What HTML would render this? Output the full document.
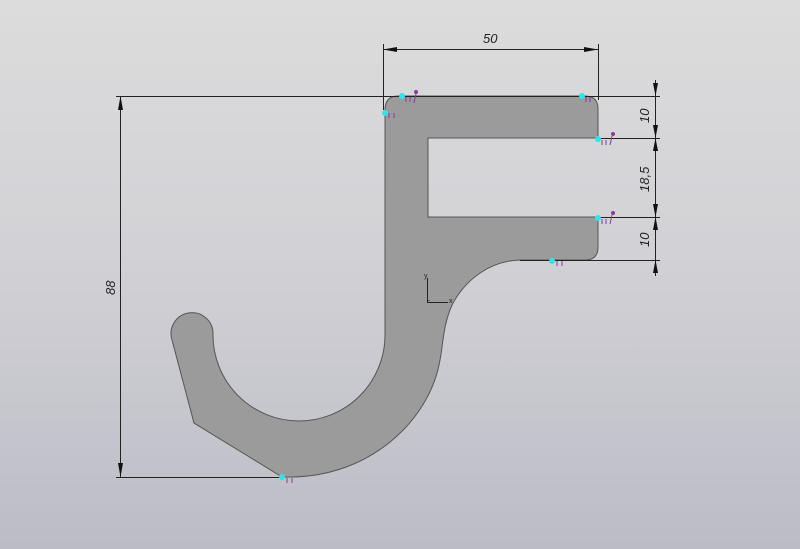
<!DOCTYPE html>
<html><head><style>
html,body{margin:0;padding:0}
body{width:800px;height:549px;overflow:hidden;background:linear-gradient(#dcdcdc 0%,#d2d2d6 45%,#bcbcc6 100%)}
svg{display:block}
text{font-family:"Liberation Sans",sans-serif;font-style:italic;font-size:13px;fill:#222}
</style></head><body>
<svg width="800" height="549" viewBox="0 0 800 549">
<path d="M398,96 L585,96 Q598,96 598,109 L598,138 L428,138 L428,217 L598,217 L598,247 Q598,260 585,260 L522,260 C490,260 465,280 452,305 C443,325 443,345 440,360 C430,420 370,477 290,477 L282,477 L194,423 L172,340 A21,21 0 1 1 213,334 A86,86 0 0 0 385,336 L385,110 Q385,96 398,96 Z" fill="#9b9b9b" stroke="#555" stroke-width="1"/>
<g stroke="#222" stroke-width="1" fill="none">
<line x1="383.5" y1="44" x2="383.5" y2="110"/>
<line x1="598.5" y1="44" x2="598.5" y2="100"/>
<line x1="383" y1="49.5" x2="598" y2="49.5"/>
<line x1="116" y1="96.5" x2="660" y2="96.5"/>
<line x1="598" y1="138.5" x2="660" y2="138.5"/>
<line x1="598" y1="217.5" x2="660" y2="217.5"/>
<line x1="520" y1="260.5" x2="660" y2="260.5"/>
<line x1="655.5" y1="80" x2="655.5" y2="276"/>
<line x1="120.5" y1="96" x2="120.5" y2="477"/>
<line x1="116" y1="477.5" x2="282" y2="477.5"/>
<polyline points="429,300 429,301" />
<line x1="427.5" y1="278" x2="427.5" y2="302"/>
<line x1="427" y1="302.5" x2="448" y2="302.5"/>
</g>
<g fill="#111">
<polygon points="383,49.5 397,47 397,52"/><polygon points="598,49.5 584,47 584,52"/>
<polygon points="655.5,96 653,83 658,83"/><polygon points="655.5,138 653,125 658,125"/>
<polygon points="655.5,138 653,151 658,151"/><polygon points="655.5,217 653,204 658,204"/>
<polygon points="655.5,217 653,230 658,230"/><polygon points="655.5,260 653,273 658,273"/>
<polygon points="120.5,96 118,110 123,110"/><polygon points="120.5,477 118,463 123,463"/>
</g>
<text x="483" y="43">50</text>
<text transform="translate(649,123) rotate(-90)">10</text>
<text transform="translate(649,192) rotate(-90)">18,5</text>
<text transform="translate(649,247) rotate(-90)">10</text>
<text transform="translate(115,295) rotate(-90)">88</text>
<text x="424" y="278" style="font-size:7px;font-style:normal">y</text>
<text x="449" y="303" style="font-size:7px;font-style:normal">x</text>
<g fill="#2ee6e6">
<circle cx="402" cy="96" r="3"/><circle cx="385" cy="113" r="3"/><circle cx="582" cy="96" r="3"/>
<circle cx="598" cy="139" r="3"/><circle cx="598" cy="218" r="3"/><circle cx="552" cy="261" r="3"/><circle cx="282" cy="477" r="3"/>
</g>
<g stroke="#8a3aa0" stroke-width="1" fill="none">
<path d="M406,97v5M410,97v5M414,103l2,-9"/><circle cx="416" cy="92" r="1.5" fill="#8a3aa0"/>
<path d="M389,113v5M394,113v5"/>
<path d="M586,97v5M590,97v5"/>
<path d="M602,140v5M606,140v5M610,145l2,-9"/><circle cx="613" cy="134" r="1.5" fill="#8a3aa0"/>
<path d="M602,219v5M606,219v5M610,224l2,-9"/><circle cx="613" cy="213" r="1.5" fill="#8a3aa0"/>
<path d="M557,261v5M562,261v5"/>
<path d="M287,478v5M292,478v5"/>
</g>
</svg>
</body></html>
